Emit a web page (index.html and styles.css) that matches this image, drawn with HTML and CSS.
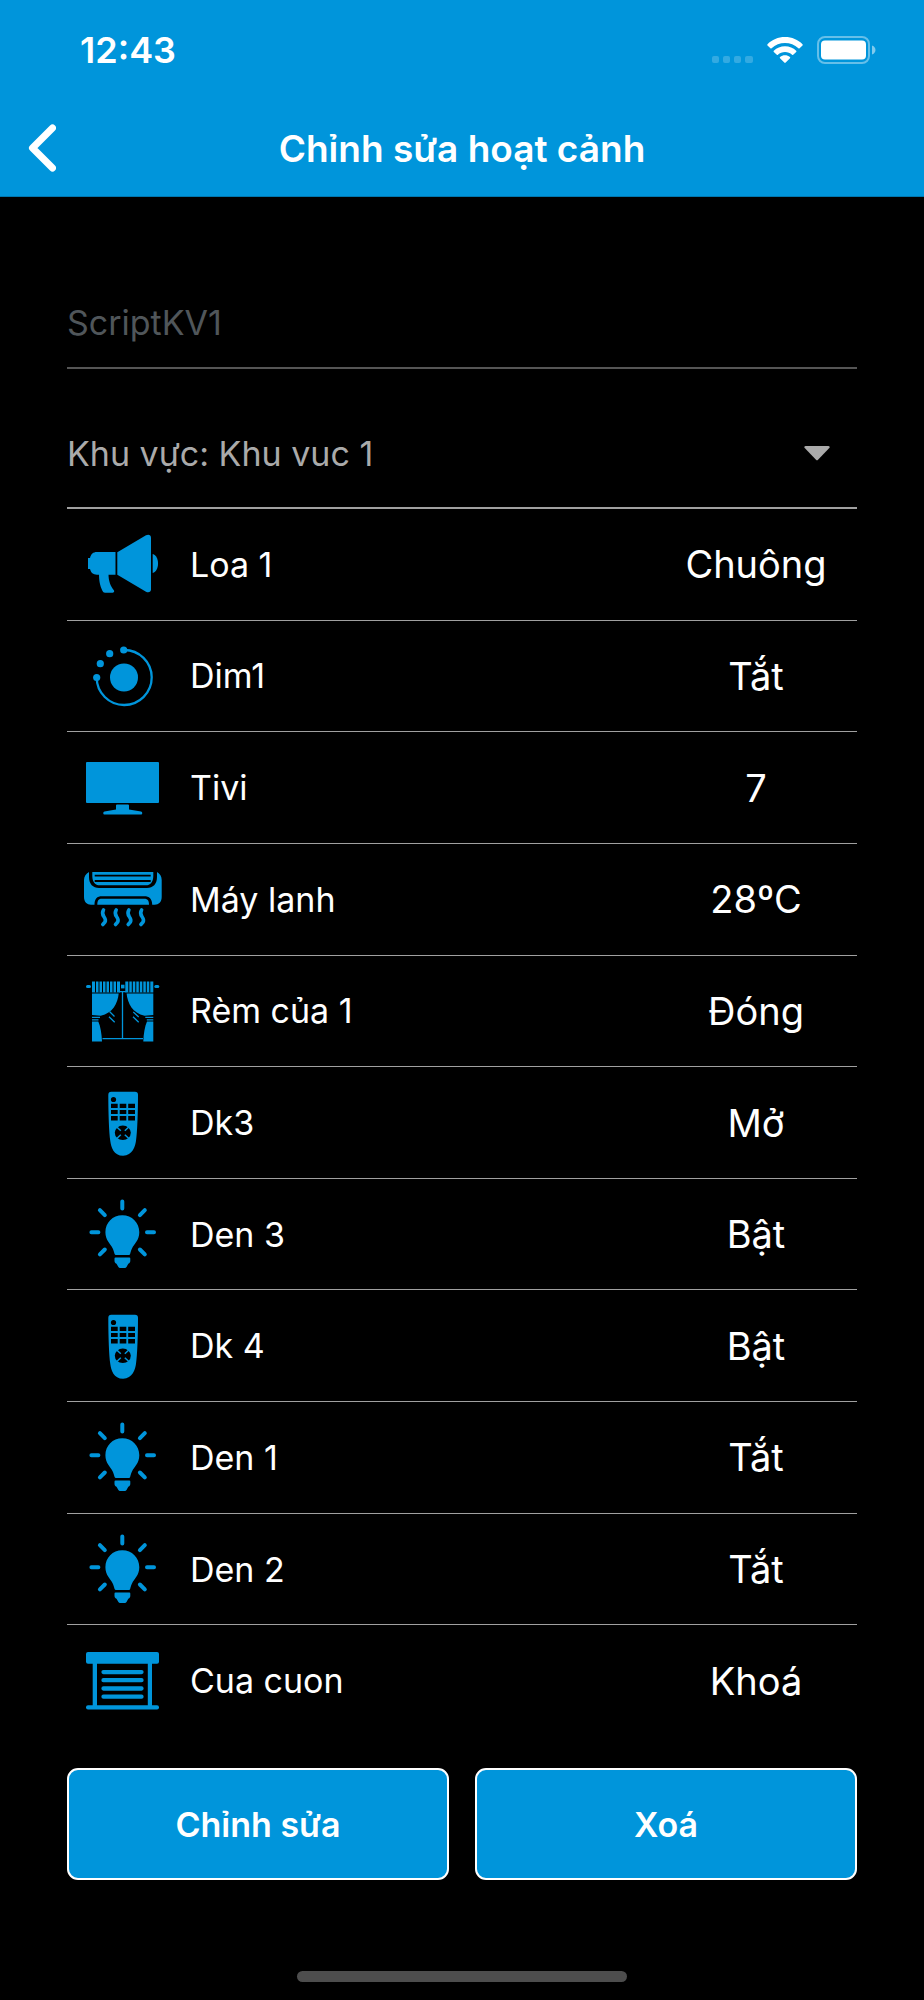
FILE: index.html
```
<!DOCTYPE html>
<html lang="vi">
<head>
    <meta charset="UTF-8">
    <meta name="viewport" content="width=device-width, initial-scale=1.0">
    <title>Chỉnh sửa hoạt cảnh</title>
    <link rel="stylesheet" href="styles.css">
</head>
<body>

    <!-- Shared icons -->
    <svg class="sprite" aria-hidden="true">
        <symbol id="icon-speaker" viewBox="0 0 80 72">
            <path d="M33.500 24v22.700H15c-4 0-6-2-7-5.700H6V30h2c1-4 3-6 7-6z"/>
            <path d="M17 46h9.500c0 7 2 12 5.500 16.500.6 1-.2 2.200-1.500 2.200H23c-1.300 0-2-.7-2.600-2C18 57.500 17 53 17 46z"/>
            <path d="M35.300 24.200 64 7.300c2.500-1.400 5-.4 5 2.400v51.600c0 2.800-2.500 3.800-5 2.400L35.300 46.700z"/>
            <path d="M70.700 26c3.500 1 5.300 5 5.300 9.500s-1.800 8.500-5.300 9.500z"/>
        </symbol>
        <symbol id="icon-dimmer" viewBox="0 0 80 72">
            <path class="line" stroke-width="2.300" d="M42 10a27.500 27.500 0 1 1-27.300 27.500"/>
            <circle cx="42" cy="37.500" r="14"/>
            <circle cx="41.700" cy="10" r="3.600"/>
            <circle cx="27.700" cy="13.700" r="3.600"/>
            <circle cx="18.300" cy="23.700" r="3.600"/>
            <circle cx="14.700" cy="37.500" r="3.600"/>
        </symbol>
        <symbol id="icon-tv" viewBox="0 0 80 72">
            <rect x="4" y="10" width="73" height="41" rx="1"/>
            <path d="M35 52.600h11q1 0 1 1v4l12 1.800q1.200.3 1.200 1.300v.900q0 1-1 1H22.300q-1 0-1-1v-.900q0-1 1.200-1.300L34 57.600v-4q0-1 1-1z"/>
        </symbol>
        <symbol id="icon-aircon" viewBox="0 0 80 72">
            <path d="M7 9v5c0 7 4 11 10 11h48c6 0 10-4 10-11V9c3 1.500 4.700 4.500 4.700 8v17c0 5-3 7.700-7 7.700h-2.500c0-6-3-8.500-8-8.500H20c-5 0-7.500 2.500-7.500 8.500H9c-4 0-7-2.700-7-7.700V17c0-3.500 2-6.500 5-8z"/>
            <path d="M10.300 9h61v4c0 6-3 9.300-7.500 9.300h-46c-4.500 0-7.500-3.300-7.500-9.300z"/>
            <path class="cut" stroke-width="1.800" d="M12.700 12.700h56M12.700 18h56"/>
            <path d="M15.300 41.700c0-4.500 1.500-6 4.500-6h42.400c3 0 4.800 1.500 4.800 6z"/>
            <path class="line round" stroke-width="3.600" d="M21.500 47c-4 6 4 7 1.500 12l-2.200 2.500M34.200 47c-4 6 4 7 1.500 12l-2.200 2.500M46.900 47c-4 6 4 7 1.500 12l-2.200 2.500M59.600 47c-4 6 4 7 1.500 12l-2.200 2.500"/>
        </symbol>
        <symbol id="icon-curtain" viewBox="0 0 80 72">
            <rect x="4" y="10" width="5" height="3" rx="1.500"/>
            <rect x="72.300" y="10" width="5" height="3" rx="1.500"/>
            <rect x="39" y="9.700" width="3.500" height="3.700"/>
            <path d="M10 6.400h28v11H10zM43.300 6.400h28v11h-28z"/>
            <path class="cut" stroke-width="1" d="M13.500 6v11.500M17 6v11.500M20.500 6v11.500M24 6v11.500M27.500 6v11.500M31 6v11.500M34.500 6v11.500M46.800 6v11.500M50.300 6v11.500M53.800 6v11.500M57.300 6v11.500M60.800 6v11.500M64.300 6v11.500M67.800 6v11.500"/>
            <path d="M10 18.400h26.700c-1 10-6 19.600-18 22.300L10 40zM71.300 18.400H44.600c1 10 6 19.600 18 22.300l8.700-.700z"/>
            <path class="line" stroke-width="1.200" d="M10 42.300h8M10 44.800h6.500M71.300 42.300h-8M71.300 44.800h-6.500"/>
            <path d="M10 46.400h6.300c2.200 5 3.400 12 3.700 20H10zM71.300 46.400H65c-2.200 5-3.400 12-3.700 20h10z"/>
            <path class="line" stroke-width="1.300" d="M37 16.700h7.300M40.500 16.700v47M20.500 63.700H61M27.500 36.500l5 5M27 41.700l5.700 5.500M51.300 37l5.400 5M51 41.700l5.700 5.500"/>
        </symbol>
        <symbol id="icon-remote" viewBox="0 0 80 72">
            <path d="M29.300 4.800H53c2 0 3 1 3 3 0 18-.7 38-2 46-.6 5-3.500 15-12.900 15S29 60 28.300 54c-1.300-8-2-28-2-46 0-2.200 1-3.200 3-3.200z"/>
            <circle class="hole" cx="31.500" cy="12.500" r="2.600"/>
            <path class="hole" d="M29 16.800h6.700v4.100H29zM37.700 16.800h6.600v4.100h-6.600zM46.200 16.800H53v4.100h-6.800zM29 22.900h6.700v4.200H29zM37.700 22.900h6.600v4.200h-6.600zM46.200 22.900H53v4.200h-6.800zM29 29h6.700v4.500H29zM37.700 29h6.600v4.500h-6.600zM46.200 29H53v4.500h-6.800z"/>
            <ellipse class="hole" cx="40.800" cy="45.800" rx="8" ry="7.200"/>
            <path class="line" stroke-width="1.500" d="M34.500 39.800l4.300 4M47.100 39.800l-4.300 4M34.500 51.800l4.300-4M47.100 51.800l-4.300-4"/>
        </symbol>
        <symbol id="icon-bulb" viewBox="0 0 80 72">
            <path d="M40.300 17.300c9.700 0 17 7.500 17 17 0 8-5 11.500-7.200 16-1 2.200-1.500 4-1.900 5.500-.2.800-.7 1.200-1.500 1.200H34c-.8 0-1.300-.4-1.500-1.200-.4-1.500-.9-3.300-1.900-5.500-2.200-4.500-7.200-8-7.200-16 0-9.500 7.200-17 16.900-17z"/>
            <path d="M33.500 59.500h13.800q1 0 1 1v2.300c0 1.600-.6 2.300-2 3l-1.800 3.200q-.6 1-1.600 1H38q-1 0-1.600-1l-1.900-3.200c-1.400-.7-2-1.400-2-3v-2.300q0-1 1-1z"/>
            <path class="line round" stroke-width="4" d="M40.300 3.500v7M17.900 12.200l4.900 4.900M62.800 12.200l-4.900 4.900M9.400 34.300h7M65 34.300h7M17.900 56.400l4.900-4.900M62.800 56.400l-4.900-4.900"/>
        </symbol>
        <symbol id="icon-shutter" viewBox="0 0 80 72">
            <rect x="4" y="7" width="73" height="11.700" rx="2"/>
            <path d="M10.700 18h4.300v43h-4.300zM65.800 18h4.200v43h-4.200z"/>
            <rect x="4" y="60.300" width="73" height="4.300" rx="2"/>
            <path class="line round" stroke-width="4.300" d="M21.500 27.100h38M21.500 35.200h38M21.500 43.500h38M21.500 51.700h38"/>
        </symbol>
    </svg>

    <header>
        <div class="status-bar">
            <span class="time">12:43</span>
            <div class="status-icons">
                <svg class="signal" width="41" height="28" viewBox="0 0 41 28">
                    <rect x="0" y="20" width="7" height="7" rx="2"/>
                    <rect x="11" y="20" width="7" height="7" rx="2"/>
                    <rect x="22" y="20" width="7" height="7" rx="2"/>
                    <rect x="33" y="20" width="8" height="7" rx="2"/>
                </svg>
                <svg class="wifi" width="36" height="28" viewBox="0 0 36 28">
                    <path d="M18 1c7 0 13 2.700 17.500 7.200.4.500.4.900 0 1.300L32.600 12.300q-.6.600-1.200 0C27.700 8.800 23 7 18 7S8.300 8.800 4.600 12.300q-.6.600-1.200 0L.5 9.500c-.4-.4-.4-.8 0-1.300C5 3.700 11 1 18 1z"/>
                    <path d="M18 10.300c4.300 0 8.200 1.600 11.200 4.400.4.400.4.800 0 1.200l-3 2.900q-.5.500-1.100 0C23.200 17 20.700 16 18 16s-5.200 1-7.100 2.800q-.6.500-1.100 0l-3-2.900c-.4-.4-.4-.8 0-1.200 3-2.800 6.900-4.400 11.200-4.400z"/>
                    <path d="M18 19.300c1.900 0 3.500.6 4.900 1.700.5.400.5.800.1 1.200l-4.300 4.400q-.7.700-1.400 0L13 22.200c-.4-.4-.4-.8.1-1.200 1.400-1.100 3-1.700 4.900-1.700z"/>
                </svg>
                <svg class="battery" width="59" height="28" viewBox="0 0 59 28">
                    <rect class="shell" x="1" y="1" width="51" height="26" rx="7"/>
                    <rect x="4" y="4.500" width="45" height="19" rx="4"/>
                    <path class="cap" d="M55 9.500c2.500 1 3.500 2.700 3.500 4.500s-1 3.500-3.500 4.500z"/>
                </svg>
            </div>
        </div>
        <nav class="nav-bar">
            <button type="button" class="back" aria-label="Quay lại">
                <svg width="28" height="48" viewBox="0 0 28 48">
                    <path d="M24.500 4 4.500 24l20 20"/>
                </svg>
            </button>
            <h1>Chỉnh sửa hoạt cảnh</h1>
        </nav>
    </header>

    <main>
        <input type="text" class="field scene-name" placeholder="ScriptKV1" aria-label="Tên hoạt cảnh">

        <div class="field area">
            <select aria-label="Khu vực">
                <option>Khu vực: Khu vuc 1</option>
            </select>
            <svg class="caret" width="26" height="15" viewBox="0 0 26 15">
                <path d="M1.500 0h23q2 .5.800 2L14 13.800q-1 1-2 0L.7 2q-1.200-1.500.8-2z"/>
            </svg>
        </div>

        <ul class="devices">
            <li>
                <svg class="icon"><use href="#icon-speaker"/></svg>
                <span class="name">Loa 1</span>
                <span class="state">Chuông</span>
            </li>
            <li>
                <svg class="icon"><use href="#icon-dimmer"/></svg>
                <span class="name">Dim1</span>
                <span class="state">Tắt</span>
            </li>
            <li>
                <svg class="icon"><use href="#icon-tv"/></svg>
                <span class="name">Tivi</span>
                <span class="state">7</span>
            </li>
            <li>
                <svg class="icon"><use href="#icon-aircon"/></svg>
                <span class="name">Máy lanh</span>
                <span class="state">28ºC</span>
            </li>
            <li>
                <svg class="icon"><use href="#icon-curtain"/></svg>
                <span class="name">Rèm của 1</span>
                <span class="state">Đóng</span>
            </li>
            <li>
                <svg class="icon"><use href="#icon-remote"/></svg>
                <span class="name">Dk3</span>
                <span class="state">Mở</span>
            </li>
            <li>
                <svg class="icon"><use href="#icon-bulb"/></svg>
                <span class="name">Den 3</span>
                <span class="state">Bật</span>
            </li>
            <li>
                <svg class="icon"><use href="#icon-remote"/></svg>
                <span class="name">Dk 4</span>
                <span class="state">Bật</span>
            </li>
            <li>
                <svg class="icon"><use href="#icon-bulb"/></svg>
                <span class="name">Den 1</span>
                <span class="state">Tắt</span>
            </li>
            <li>
                <svg class="icon"><use href="#icon-bulb"/></svg>
                <span class="name">Den 2</span>
                <span class="state">Tắt</span>
            </li>
            <li>
                <svg class="icon"><use href="#icon-shutter"/></svg>
                <span class="name">Cua cuon</span>
                <span class="state">Khoá</span>
            </li>
        </ul>

        <div class="actions">
            <button type="button">Chỉnh sửa</button>
            <button type="button">Xoá</button>
        </div>
    </main>

    <div class="home-bar"></div>

</body>
</html>
```
FILE: styles.css
```
* {
    box-sizing: border-box;
}

body {
    font-family: Inter, 'Liberation Sans', sans-serif;
    font-size: 34px;
    background-color: #000;
    color: #fff;
    margin: 0;
    min-height: 100vh;
    display: flex;
    flex-direction: column;
}

button, input, select {
    font: inherit;
    color: inherit;
}

.sprite {
    position: absolute;
    width: 0;
    height: 0;
}

header {
    background-color: #0095db;
    border-bottom: 1px solid #0077af;
}

.status-bar {
    display: flex;
    justify-content: space-between;
    align-items: center;
    height: 100px;
    padding: 0 48px 0 80px;
}

.time {
    font-size: 36px;
    font-weight: 600;
}

.status-icons {
    display: flex;
    gap: 14px;
    fill: #fff;
}

.signal {
    opacity: 0.2;
}

.shell {
    fill: none;
    stroke: #fff;
    stroke-width: 2;
    opacity: 0.4;
}

.cap {
    opacity: 0.5;
}

.nav-bar {
    display: grid;
    grid-template-columns: 84px 1fr 84px;
    align-items: center;
    height: 96px;
}

.back {
    background: none;
    border: none;
    padding: 0 0 0 28px;
    height: 96px;
    text-align: left;
    cursor: pointer;
}

.back svg {
    display: block;
    fill: none;
    stroke: #fff;
    stroke-width: 7;
    stroke-linecap: round;
    stroke-linejoin: round;
}

h1 {
    font-size: 37px;
    font-weight: 600;
    text-align: center;
    margin: 0;
}

main {
    flex: 1;
    display: flex;
    flex-direction: column;
    padding: 80px 67px 0;
}

.field {
    width: 100%;
    background: none;
    border: none;
    border-bottom: 2px solid #555;
    border-radius: 0;
    padding: 0;
    outline: none;
}

.scene-name {
    height: 92px;
}

.scene-name::placeholder {
    color: #50565a;
    opacity: 1;
}

.area {
    display: flex;
    align-items: center;
    height: 110px;
    margin-top: 30px;
    padding-right: 27px;
    border-color: #a0a0a0;
    color: #aaa;
}

.area select {
    flex: 1;
    appearance: none;
    background: none;
    border: none;
    padding: 0;
    outline: none;
}

.caret {
    fill: #aaa;
}

.devices {
    flex: 1;
    display: flex;
    flex-direction: column;
    list-style: none;
    margin: 0;
    padding: 0;
}

.devices li {
    flex: 1;
    display: grid;
    grid-template-columns: 110px 1fr 202px;
    align-items: center;
}

.devices li + li {
    border-top: 1px solid #a0a0a0;
}

.icon {
    width: 80px;
    height: 72px;
    margin: 0 auto;
    fill: #0095db;
}

.line {
    fill: none;
    stroke: #0095db;
}

.round {
    stroke-linecap: round;
}

.cut {
    stroke: #000;
}

.hole {
    fill: #000;
}

.name {
    padding-left: 13px;
}

.state {
    font-size: 38px;
    text-align: center;
}

.actions {
    display: grid;
    grid-template-columns: 1fr 1fr;
    gap: 26px;
    margin-top: 32px;
}

.actions button {
    height: 112px;
    background-color: #0095db;
    border: 2px solid #fff;
    border-radius: 11px;
    padding: 0;
    font-weight: 600;
    cursor: pointer;
}

.home-bar {
    width: 330px;
    height: 11px;
    margin: 91px auto 18px;
    border-radius: 6px;
    background-color: #4d4d4d;
}
```
